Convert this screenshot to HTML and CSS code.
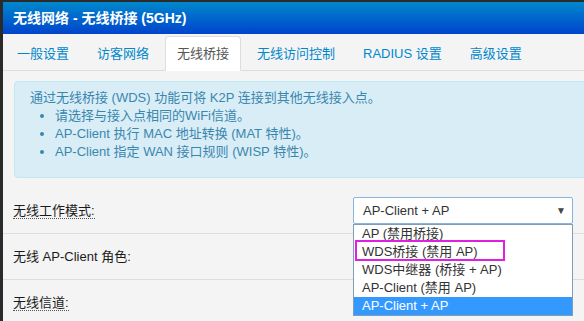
FILE: index.html
```html
<!DOCTYPE html>
<html lang="zh-CN">
<head>
    <meta charset="UTF-8">
    <title>无线网络 - 无线桥接 (5GHz)</title>
    <link rel="stylesheet" href="styles.css">
</head>
<body>

<div class="panel">
    <div class="panel-head">无线网络 - 无线桥接 (5GHz)</div>

    <ul class="tabs">
        <li><a href="#">一般设置</a></li>
        <li><a href="#">访客网络</a></li>
        <li class="active"><a href="#">无线桥接</a></li>
        <li><a href="#">无线访问控制</a></li>
        <li><a href="#">RADIUS 设置</a></li>
        <li><a href="#">高级设置</a></li>
    </ul>

    <div class="panel-body">
        <div class="alert">
            <p>通过无线桥接 (WDS) 功能可将 K2P 连接到其他无线接入点。</p>
            <ul>
                <li>请选择与接入点相同的WiFi信道。</li>
                <li>AP-Client 执行 MAC 地址转换 (MAT 特性)。</li>
                <li>AP-Client 指定 WAN 接口规则 (WISP 特性)。</li>
            </ul>
        </div>
    </div>

    <div class="row">
        <div class="label"><span class="hint">无线工作模式:</span></div>
        <div class="select-wrap">
            <div class="select">
                <span>AP-Client + AP</span>
                <span class="arrow">▼</span>
            </div>
            <ul class="dropdown">
                <li>AP (禁用桥接)</li>
                <li>WDS桥接 (禁用 AP)</li>
                <li>WDS中继器 (桥接 + AP)</li>
                <li>AP-Client (禁用 AP)</li>
                <li class="selected">AP-Client + AP</li>
            </ul>
            <div class="mark"></div>
        </div>
    </div>

    <div class="row">
        <div class="label"><span>无线 AP-Client 角色:</span></div>
    </div>

    <div class="row">
        <div class="label"><span class="hint">无线信道:</span></div>
    </div>
</div>

</body>
</html>
```

FILE: styles.css
```css
html, body {
    margin: 0;
    padding: 0;
    height: 100%;
    overflow: hidden;
}
body {
    background-color: #2a2a2a;
    padding: 2px 0 0 3px;
    font-family: "Liberation Sans", "Noto Sans CJK SC", sans-serif;
    font-size: 13px;
    color: #333;
}
.panel {
    width: 640px;
    height: 400px;
    background-color: #f4f4f4;
}
.panel-head {
    height: 32px;
    line-height: 32px;
    padding-left: 10px;
    font-size: 14px;
    font-weight: bold;
    color: white;
    background: linear-gradient(to bottom, #0088cc, #0044cc);
}
.tabs {
    list-style: none;
    margin: 0;
    padding: 2px 0 0 2px;
    display: flex;
    border-bottom: 1px solid #ddd;
}
.tabs li {
    margin-right: 4px;
    margin-bottom: -1px;
}
.tabs a {
    display: block;
    padding: 0 11px;
    line-height: 33px;
    border: 1px solid transparent;
    border-radius: 4px 4px 0 0;
    color: #0088cc;
    text-decoration: none;
}
.tabs .active a {
    background-color: white;
    border-color: #ddd #ddd transparent;
    color: #555;
}
.panel-body {
    padding: 10px 0 10px 11px;
}
.alert {
    background-color: #d9edf7;
    border: 1px solid #bce8f1;
    border-radius: 4px;
    color: #3a87ad;
    padding: 7px 14px 16px 15px;
    line-height: 18px;
}
.alert p {
    margin: 0;
}
.alert ul {
    margin: 0;
    padding-left: 25px;
}
.row {
    display: flex;
    align-items: center;
    min-height: 27px;
    padding: 9px 0 9px 10px;
}
.row + .row {
    border-top: 1px solid #ddd;
}
.label {
    width: 340px;
    color: #1a1a1a;
}
.label span {
    display: inline-block;
    line-height: 15px;
}
.hint {
    border-bottom: 1px dotted #555;
}
.select-wrap {
    position: relative;
    width: 220px;
}
.select {
    height: 25px;
    border: 1px solid #8ab4e0;
    border-radius: 2px;
    background-color: white;
    padding: 0 6px 0 9px;
    display: flex;
    align-items: center;
    justify-content: space-between;
}
.arrow {
    font-size: 10px;
    color: #444;
}
.dropdown {
    position: absolute;
    top: 100%;
    left: 0;
    right: 0;
    margin: 0;
    padding: 0;
    list-style: none;
    background-color: white;
    border: 1px solid #7f9db9;
    z-index: 2;
}
.dropdown li {
    height: 18px;
    line-height: 18px;
    padding-left: 8px;
}
.dropdown .selected {
    background-color: #3399ff;
    color: white;
}
.mark {
    position: absolute;
    left: 2px;
    top: 43px;
    width: 146px;
    height: 17px;
    border: 2px solid #e020e0;
    z-index: 3;
}
```
